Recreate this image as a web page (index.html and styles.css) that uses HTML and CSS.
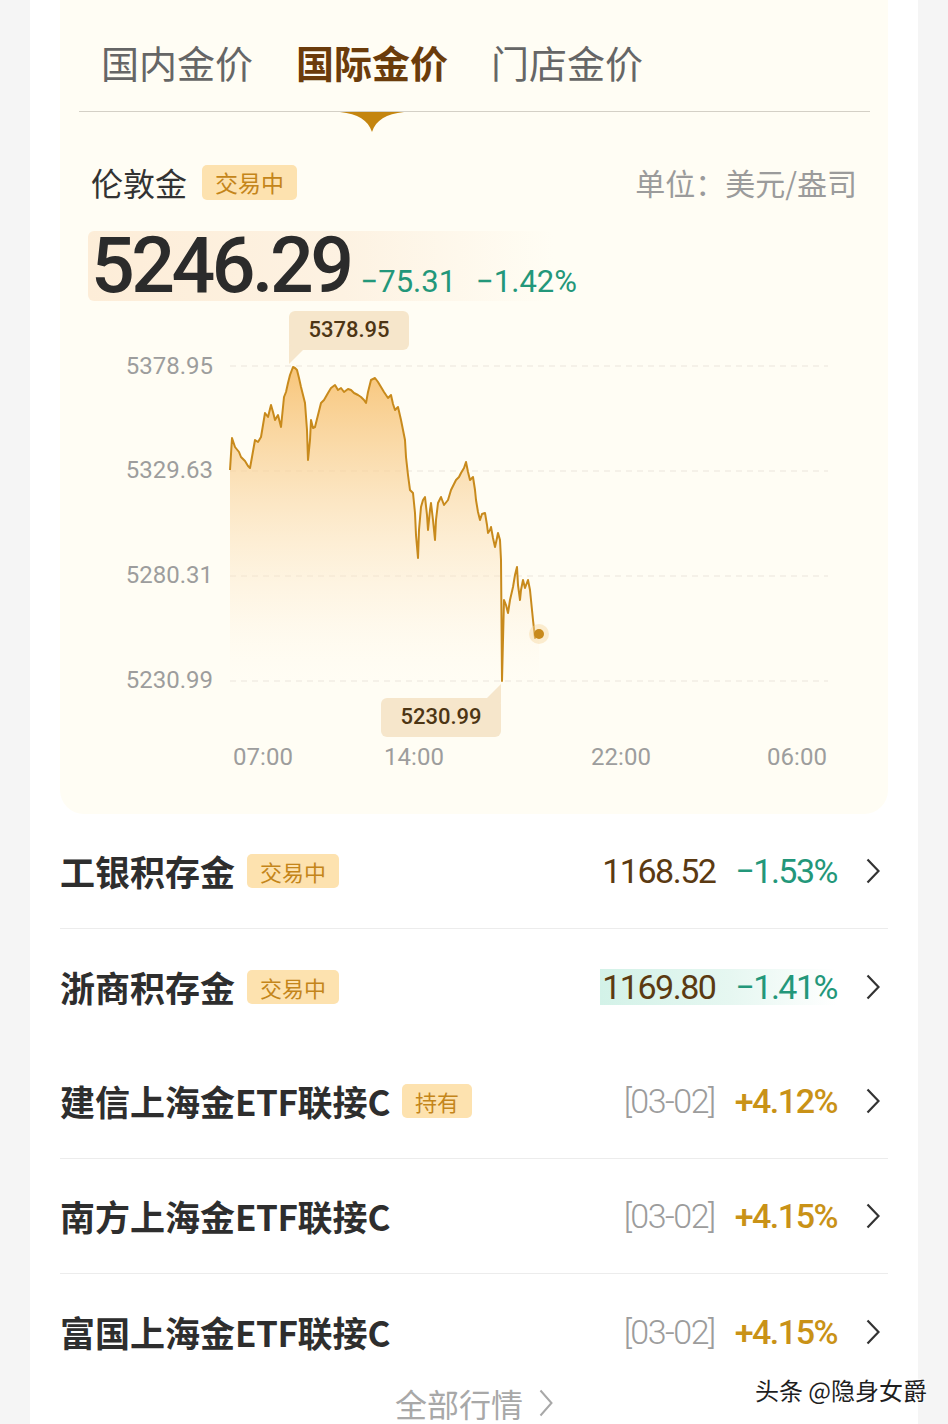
FILE: index.html
```html
<!DOCTYPE html>
<html lang="zh-CN">
<head>
<meta charset="utf-8">
<title>国际金价</title>
<link rel="stylesheet" href="styles.css">
</head>
<body>
<div class="page">
  <section class="panel">
    <nav class="tabs">
      <span class="tab">国内金价</span>
      <span class="tab active">国际金价<svg class="tab-arrow" viewBox="0 0 64 20"><path d="M0 0H64C46 2 36 8 32 20C28 8 18 2 0 0Z" fill="#c4850f"/></svg></span>
      <span class="tab">门店金价</span>
    </nav>
    <div class="divider"></div>

    <div class="quote-head">
      <div class="quote-title"><span class="quote-name">伦敦金</span><span class="badge">交易中</span></div>
      <span class="unit">单位：美元/盎司</span>
    </div>

    <div class="price-row">
      <span class="price">5246.29</span>
      <span class="chg">−75.31</span>
      <span class="chg chg-pct">−1.42%</span>
    </div>

    <svg class="chart" viewBox="62 305 826 490" width="826" height="490">
      <defs>
        <linearGradient id="area" gradientUnits="userSpaceOnUse" x1="0" y1="367" x2="0" y2="690">
          <stop offset="0" stop-color="#f7bf6c" stop-opacity="0.9"/>
          <stop offset="0.35" stop-color="#f9d39a" stop-opacity="0.65"/>
          <stop offset="0.75" stop-color="#fde9cc" stop-opacity="0.3"/>
          <stop offset="1" stop-color="#fffaf0" stop-opacity="0"/>
        </linearGradient>
      </defs>
      <g class="grid">
        <line x1="232" y1="366" x2="830" y2="366"/>
        <line x1="232" y1="471" x2="830" y2="471"/>
        <line x1="232" y1="576" x2="830" y2="576"/>
        <line x1="232" y1="681" x2="830" y2="681"/>
      </g>
      <g class="ylab">
        <text x="215" y="374">5378.95</text>
        <text x="215" y="478">5329.63</text>
        <text x="215" y="583">5280.31</text>
        <text x="215" y="688">5230.99</text>
      </g>
      <path class="area" d="M232,470 L234,438 237,447 241,452 243,457 247,461 250,466 252,468 254,457 257,440 260,442 263,437 265,425 267,413 270,417 273,405 275,412 277,420 280,415 283,427 286,397 288,392 290,383 292,375 295,367 297,368 299,370 301,378 303,387 305,395 307,403 309,430 310,460 312,440 313,420 315,428 317,427 320,415 323,403 326,400 330,393 333,388 337,385 340,390 343,388 346,392 350,389 353,390 356,393 360,395 363,397 366,400 368,403 370,392 373,380 377,378 380,382 383,387 386,392 390,398 393,395 395,404 397,410 400,407 403,420 405,430 407,440 408,457 410,475 412,490 415,493 417,513 418,535 420,558 421,530 423,507 425,500 427,497 429,515 430,530 432,510 433,503 435,520 437,540 438,520 440,503 443,497 446,505 450,500 453,490 456,484 458,480 461,477 463,473 466,468 468,462 470,472 472,480 475,477 477,490 478,500 480,512 482,520 484,514 487,513 489,525 490,533 492,530 493,527 495,538 497,547 499,538 500,533 502,540 503,560 504,681 505,640 506,600 508,605 510,613 512,600 515,587 517,575 519,567 520,585 522,600 523,590 525,580 527,588 530,580 532,590 533,600 535,620 537,638 539,632 541,634 L541,690 L232,690 Z"/>
      <polyline class="line" points="232,470 234,438 237,447 241,452 243,457 247,461 250,466 252,468 254,457 257,440 260,442 263,437 265,425 267,413 270,417 273,405 275,412 277,420 280,415 283,427 286,397 288,392 290,383 292,375 295,367 297,368 299,370 301,378 303,387 305,395 307,403 309,430 310,460 312,440 313,420 315,428 317,427 320,415 323,403 326,400 330,393 333,388 337,385 340,390 343,388 346,392 350,389 353,390 356,393 360,395 363,397 366,400 368,403 370,392 373,380 377,378 380,382 383,387 386,392 390,398 393,395 395,404 397,410 400,407 403,420 405,430 407,440 408,457 410,475 412,490 415,493 417,513 418,535 420,558 421,530 423,507 425,500 427,497 429,515 430,530 432,510 433,503 435,520 437,540 438,520 440,503 443,497 446,505 450,500 453,490 456,484 458,480 461,477 463,473 466,468 468,462 470,472 472,480 475,477 477,490 478,500 480,512 482,520 484,514 487,513 489,525 490,533 492,530 493,527 495,538 497,547 499,538 500,533 502,540 503,560 504,681 505,640 506,600 508,605 510,613 512,600 515,587 517,575 519,567 520,585 522,600 523,590 525,580 527,588 530,580 532,590 533,600 535,620 537,638 539,632 541,634"/>
      <circle cx="541" cy="634" r="10" fill="#f6d8a0" fill-opacity="0.45"/>
      <circle cx="541" cy="634" r="5" fill="#c88a1c"/>

      <g class="tip">
        <rect x="291" y="311" width="120" height="39" rx="6"/>
        <polygon points="291,345 305,350 291,364"/>
        <text x="351" y="337">5378.95</text>
      </g>
      <g class="tip">
        <rect x="383" y="698" width="120" height="39" rx="6"/>
        <polygon points="503,684 503,703 489,698"/>
        <text x="443" y="724">5230.99</text>
      </g>

      <g class="xlab">
        <text x="265" y="765">07:00</text>
        <text x="416" y="765">14:00</text>
        <text x="623" y="765">22:00</text>
        <text x="799" y="765">06:00</text>
      </g>
    </svg>
  </section>

  <ul class="list">
    <li class="row sep">
      <span class="row-name">工银积存金</span><span class="tag">交易中</span>
      <span class="vals"><span class="v-price">1168.52</span><span class="v-down">−1.53%</span></span>
      <svg class="chev" viewBox="0 0 14 26"><polyline points="1.5,1.5 12.5,13 1.5,24.5"/></svg>
    </li>
    <li class="row">
      <span class="row-name">浙商积存金</span><span class="tag">交易中</span>
      <span class="vals v-hl"><span class="v-price">1169.80</span><span class="v-down">−1.41%</span></span>
      <svg class="chev" viewBox="0 0 14 26"><polyline points="1.5,1.5 12.5,13 1.5,24.5"/></svg>
    </li>
    <li class="row sep">
      <span class="row-name">建信上海金<span class="latin">ETF</span>联接<span class="latin">C</span></span><span class="tag">持有</span>
      <span class="vals"><span class="v-date">[03-02]</span><span class="v-up">+4.12%</span></span>
      <svg class="chev" viewBox="0 0 14 26"><polyline points="1.5,1.5 12.5,13 1.5,24.5"/></svg>
    </li>
    <li class="row sep">
      <span class="row-name">南方上海金<span class="latin">ETF</span>联接<span class="latin">C</span></span>
      <span class="vals"><span class="v-date">[03-02]</span><span class="v-up">+4.15%</span></span>
      <svg class="chev" viewBox="0 0 14 26"><polyline points="1.5,1.5 12.5,13 1.5,24.5"/></svg>
    </li>
    <li class="row">
      <span class="row-name">富国上海金<span class="latin">ETF</span>联接<span class="latin">C</span></span>
      <span class="vals"><span class="v-date">[03-02]</span><span class="v-up">+4.15%</span></span>
      <svg class="chev" viewBox="0 0 14 26"><polyline points="1.5,1.5 12.5,13 1.5,24.5"/></svg>
    </li>
  </ul>

  <div class="more">全部行情<svg class="more-chev" viewBox="0 0 14 28"><polyline points="1.5,1.5 12.5,14 1.5,26.5"/></svg></div>
</div>
<div class="watermark">头条 @隐身女爵</div>
</body>
</html>
```

FILE: styles.css
```css
* {
  box-sizing: border-box;
  margin: 0;
  padding: 0;
}

body {
  position: relative;
  background: #f5f5f5;
  font-family: "Noto Sans CJK SC", "Noto Sans", sans-serif;
  min-height: 1424px;
  overflow: hidden;
}

.page {
  margin: 0 30px;
  background: #ffffff;
  min-height: 1424px;
}

.panel {
  margin: 0 30px;
  background: #fffdf4;
  border-radius: 0 0 24px 24px;
  padding-bottom: 19px;
}

.tabs {
  display: flex;
  gap: 43px;
  padding: 37px 0 24px 41px;
}

.tab {
  position: relative;
  font-size: 38px;
  line-height: 50px;
  color: #666666;
}

.tab.active {
  color: #6b3c0b;
  font-weight: 700;
}

.tab-arrow {
  position: absolute;
  top: 75px;
  left: 50%;
  margin-left: -32px;
  width: 64px;
  height: 20px;
  display: block;
}

.divider {
  height: 1px;
  background: #d4d0c6;
  margin: 0 18px 0 19px;
}

.quote-head {
  display: flex;
  align-items: center;
  justify-content: space-between;
  margin-top: 50px;
  padding: 0 31px;
  height: 40px;
}

.quote-title {
  display: flex;
  align-items: center;
}

.quote-name {
  font-size: 32px;
  line-height: 40px;
  color: #333333;
}

.badge {
  margin-left: 15px;
  font-size: 23px;
  line-height: 35px;
  padding: 0 13px;
  border-radius: 5px;
  background: #fde2af;
  color: #c4851a;
}

.unit {
  font-size: 30px;
  color: #9b9b9b;
}

.price-row {
  display: flex;
  align-items: baseline;
  margin: 29px 0 0 28px;
  width: 465px;
  height: 70px;
  padding-left: 3px;
  border-radius: 6px 0 0 6px;
  background: linear-gradient(90deg, #fdedd8 0%, #fdf2e2 55%, rgba(255, 253, 244, 0) 100%);
  font-family: Roboto, "Noto Sans", sans-serif;
}

.price {
  font-size: 77px;
  line-height: 70px;
  font-weight: 500;
  letter-spacing: -3.5px;
  color: #2b2b2b;
}

.chg {
  margin-left: 10px;
  font-size: 31px;
  color: #23977a;
}

.chg-pct {
  margin-left: 20px;
}

.chart {
  display: block;
  margin-top: 4px;
  font-family: Roboto, "Noto Sans", sans-serif;
}

.grid line {
  stroke: #ebe6dc;
  stroke-width: 1.2;
  stroke-dasharray: 6 5;
}

.ylab text {
  font-size: 24px;
  fill: #9d9d9d;
  text-anchor: end;
}

.xlab text {
  font-size: 24px;
  fill: #9d9d9d;
  text-anchor: middle;
}

.area {
  fill: url(#area);
}

.line {
  fill: none;
  stroke: #c88a1c;
  stroke-width: 2;
  stroke-linejoin: round;
}

.tip rect,
.tip polygon {
  fill: #f6e6cb;
}

.tip text {
  font-size: 22px;
  font-weight: 500;
  fill: #4d3514;
  text-anchor: middle;
}

.list {
  list-style: none;
  margin: 0 30px;
}

.row {
  display: flex;
  align-items: center;
  height: 115px;
  padding-right: 8px;
}

.row.sep {
  border-bottom: 1px solid #ececec;
}

.row-name {
  font-size: 35px;
  line-height: 40px;
  font-weight: 700;
  color: #2e2e2e;
}

.latin {
  letter-spacing: -0.5px;
}

.tag {
  margin-left: 12px;
  font-size: 22px;
  line-height: 34px;
  padding: 0 13px;
  border-radius: 5px;
  background: #fde2af;
  color: #c4851a;
}

.vals {
  margin-left: auto;
  display: flex;
  align-items: center;
  gap: 20px;
  font-family: Roboto, "Noto Sans", sans-serif;
  font-size: 34px;
  letter-spacing: -1.5px;
  line-height: 36px;
  padding-left: 2px;
}

.v-hl {
  background: linear-gradient(90deg, #d3f2e8 0%, #e6f7f1 55%, rgba(255, 255, 255, 0) 100%);
}

.v-price {
  color: #5b3a12;
}

.v-down {
  color: #23977a;
}

.v-date {
  color: #9c9c9c;
  font-weight: 300;
}

.v-up {
  color: #c99217;
  font-weight: 500;
}

.chev {
  width: 14px;
  height: 26px;
  margin-left: 29px;
  fill: none;
  stroke: #333333;
  stroke-width: 2.2;
}

.more {
  display: flex;
  align-items: center;
  justify-content: center;
  gap: 16px;
  height: 36px;
  margin-top: -4px;
  font-size: 32px;
  line-height: 36px;
  color: #a8a8a8;
}

.more-chev {
  width: 14px;
  height: 28px;
  fill: none;
  stroke: #a8a8a8;
  stroke-width: 2;
}

.watermark {
  position: absolute;
  right: 21px;
  top: 1374px;
  font-size: 24px;
  line-height: 32px;
  color: #1f1f1f;
  text-shadow: 0 0 2px #fff, 0 0 2px #fff, 0 0 3px #fff;
}
```
